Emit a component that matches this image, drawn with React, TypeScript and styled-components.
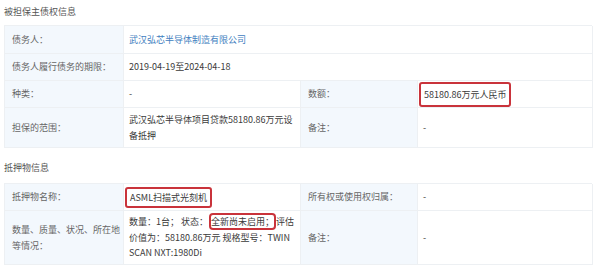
import React, { FC, ReactNode } from 'react'
import styled, { createGlobalStyle } from 'styled-components'

const GlobalStyle = createGlobalStyle`
  html, body {
    margin: 0;
    padding: 0;
    background: #fff;
  }
  body {
    font-family: "Noto Sans CJK SC", "Noto Sans", sans-serif;
    font-size: 9px;
    color: #3a3a3a;
  }
`

const Page = styled.div`
  width: 600px;
  height: 268px;
  overflow: hidden;
  padding: 0 4px;
  box-sizing: border-box;
`

const SectionTitle = styled.div<{ $top: number; $height: number }>`
  box-sizing: border-box;
  height: ${({ $height }) => $height}px;
  padding-top: ${({ $top }) => $top}px;
  line-height: 14px;
  color: #555;
`

const Table = styled.div<{ $rows: string }>`
  display: grid;
  grid-template-columns: 119px 177px 117px 175px;
  grid-template-rows: ${({ $rows }) => $rows};
  width: 588px;
  box-sizing: border-box;
  border-top: 1px solid #edf0f3;
  border-left: 1px solid #edf0f3;
`

const Cell = styled.div<{ $label?: boolean; $span?: number }>`
  display: flex;
  align-items: center;
  box-sizing: border-box;
  min-width: 0;
  grid-column: span ${({ $span }) => $span || 1};
  border-right: 1px solid #edf0f3;
  border-bottom: 1px solid #edf0f3;
  line-height: 15.5px;
  padding: ${({ $label }) => ($label ? '0 2px 0 7px' : '0 1px 0 5px')};
  background: ${({ $label }) => ($label ? '#f3f8fd' : '#fff')};
  color: ${({ $label }) => ($label ? '#666' : '#3a3a3a')};
`

const Link = styled.span`
  color: #3f80c0;
`

const Mark = styled.span<{ $pad: number; $left: number }>`
  display: inline-block;
  border: 2px solid #c9333b;
  border-radius: 3px;
  line-height: 13px;
  padding: ${({ $pad }) => $pad}px 3px;
  margin: 0 -2px 0 ${({ $left }) => $left}px;
`

const Inline = styled.span`
  border-radius: 2px;
  box-shadow: 0 0 0 2px #c9333b;
  margin: 0 2px 0 3px;
`

type RowProps = { label: string; children: ReactNode; span?: number }

const Field: FC<RowProps> = ({ label, children, span }) => (
  <>
    <Cell $label>{label}</Cell>
    <Cell $span={span}>{children}</Cell>
  </>
)

export default function App() {
  return (
    <Page>
      <GlobalStyle />
      <SectionTitle $top={5} $height={25}>被担保主债权信息</SectionTitle>
      <Table $rows="28px 27px 27px 40px">
        <Field label="债务人：" span={3}>
          <Link>武汉弘芯半导体制造有限公司</Link>
        </Field>
        <Field label="债务人履行债务的期限：" span={3}>
          2019-04-19至2024-04-18
        </Field>
        <Field label="种类：">-</Field>
        <Field label="数额：">
          <Mark $pad={4} $left={-4}>58180.86万元人民币</Mark>
        </Field>
        <Field label="担保的范围：">武汉弘芯半导体项目贷款58180.86万元设备抵押</Field>
        <Field label="备注：">-</Field>
      </Table>

      <SectionTitle $top={13} $height={35}>抵押物信息</SectionTitle>
      <Table $rows="27px 54px">
        <Field label="抵押物名称：">
          <Mark $pad={2} $left={-4}>ASML扫描式光刻机</Mark>
        </Field>
        <Field label="所有权或使用权归属：">-</Field>
        <Field label="数量、质量、状况、所在地等情况：">
          <span>
            数量：1台； 状态：<Inline>全新尚未启用；</Inline>评估价值为：58180.86万元 规格型号：TWIN SCAN NXT:1980Di
          </span>
        </Field>
        <Field label="备注：">-</Field>
      </Table>
    </Page>
  )
}
